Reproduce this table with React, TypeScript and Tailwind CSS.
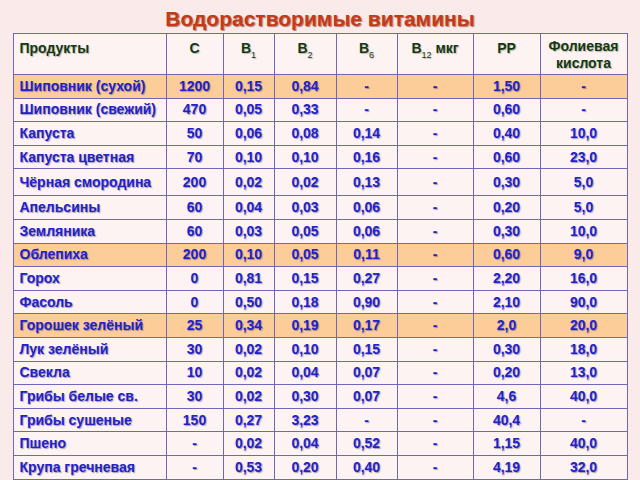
import React from 'react';

type Row = { name: string; vals: string[]; hl?: boolean; tall?: boolean };

const rows: Row[] = [
  { name: 'Шиповник (сухой)', vals: ['1200', '0,15', '0,84', '-', '-', '1,50', '-'], hl: true },
  { name: 'Шиповник (свежий)', vals: ['470', '0,05', '0,33', '-', '-', '0,60', '-'] },
  { name: 'Капуста', vals: ['50', '0,06', '0,08', '0,14', '-', '0,40', '10,0'] },
  { name: 'Капуста цветная', vals: ['70', '0,10', '0,10', '0,16', '-', '0,60', '23,0'] },
  { name: 'Чёрная смородина', vals: ['200', '0,02', '0,02', '0,13', '-', '0,30', '5,0'], tall: true },
  { name: 'Апельсины', vals: ['60', '0,04', '0,03', '0,06', '-', '0,20', '5,0'] },
  { name: 'Земляника', vals: ['60', '0,03', '0,05', '0,06', '-', '0,30', '10,0'] },
  { name: 'Облепиха', vals: ['200', '0,10', '0,05', '0,11', '-', '0,60', '9,0'], hl: true },
  { name: 'Горох', vals: ['0', '0,81', '0,15', '0,27', '-', '2,20', '16,0'] },
  { name: 'Фасоль', vals: ['0', '0,50', '0,18', '0,90', '-', '2,10', '90,0'] },
  { name: 'Горошек зелёный', vals: ['25', '0,34', '0,19', '0,17', '-', '2,0', '20,0'], hl: true },
  { name: 'Лук зелёный', vals: ['30', '0,02', '0,10', '0,15', '-', '0,30', '18,0'] },
  { name: 'Свекла', vals: ['10', '0,02', '0,04', '0,07', '-', '0,20', '13,0'] },
  { name: 'Грибы белые св.', vals: ['30', '0,02', '0,30', '0,07', '-', '4,6', '40,0'] },
  { name: 'Грибы сушеные', vals: ['150', '0,27', '3,23', '-', '-', '40,4', '-'] },
  { name: 'Пшено', vals: ['-', '0,02', '0,04', '0,52', '-', '1,15', '40,0'] },
  { name: 'Крупа гречневая', vals: ['-', '0,53', '0,20', '0,40', '-', '4,19', '32,0'] },
];

const widths = ['w-[153px]', 'w-[57px]', 'w-[51px]', 'w-[62px]', 'w-[61px]', 'w-[76px]', 'w-[67px]', 'w-[87px]'];

const cell = 'border border-[#6f67b8] px-[6px] py-0';
const blue = 'text-[#2222c8] [text-shadow:1px_1px_1px_rgba(50,50,110,0.45)]';
const green = 'text-[#123a12] [text-shadow:1px_1px_1px_rgba(0,0,0,0.25)]';

function Sub({ children }: { children: React.ReactNode }) {
  return <sub className="text-[9px] font-normal align-[-3px]">{children}</sub>;
}

export default function App() {
  return (
    <div
      className="flex h-[480px] w-[640px] flex-col items-center bg-[#fbeaea] pt-[5px]"
      style={{ fontFamily: '"Liberation Sans", Arial, sans-serif' }}
    >
      <h1 className="h-[28px] text-[21px] font-bold leading-[28px] text-[#c43a18] [text-shadow:1px_1px_1px_rgba(90,20,0,0.5)]">
        Водорастворимые витамины
      </h1>
      <table className="table-fixed border-collapse bg-[#fdf3f3] text-[14px] font-bold">
        <colgroup>
          {widths.map((w, i) => (
            <col key={i} className={w} />
          ))}
        </colgroup>
        <thead>
          <tr className={`h-[41px] align-top ${green}`}>
            <th className={`${cell} pt-[4px] text-left`}>Продукты</th>
            <th className={`${cell} pt-[4px] text-center`}>С</th>
            <th className={`${cell} pt-[4px] text-center`}>
              В<Sub>1</Sub>
            </th>
            <th className={`${cell} pt-[4px] text-center`}>
              В<Sub>2</Sub>
            </th>
            <th className={`${cell} pt-[4px] text-center`}>
              В<Sub>6</Sub>
            </th>
            <th className={`${cell} pt-[4px] text-center`}>
              В<Sub>12</Sub> мкг
            </th>
            <th className={`${cell} pt-[4px] text-center`}>РР</th>
            <th className={`${cell} pt-[4px] text-center leading-[17px]`}>
              Фолиевая
              <br />
              кислота
            </th>
          </tr>
        </thead>
        <tbody className={blue}>
          {rows.map((r) => (
            <tr
              key={r.name}
              className={`${r.tall ? 'h-[27px]' : 'h-[23.6px]'} ${r.hl ? 'bg-[#fccc99]' : ''}`}
            >
              <td className={`${cell} text-left whitespace-nowrap`}>{r.name}</td>
              {r.vals.map((v, i) => (
                <td key={i} className={`${cell} text-center`}>
                  {v}
                </td>
              ))}
            </tr>
          ))}
        </tbody>
      </table>
    </div>
  );
}
